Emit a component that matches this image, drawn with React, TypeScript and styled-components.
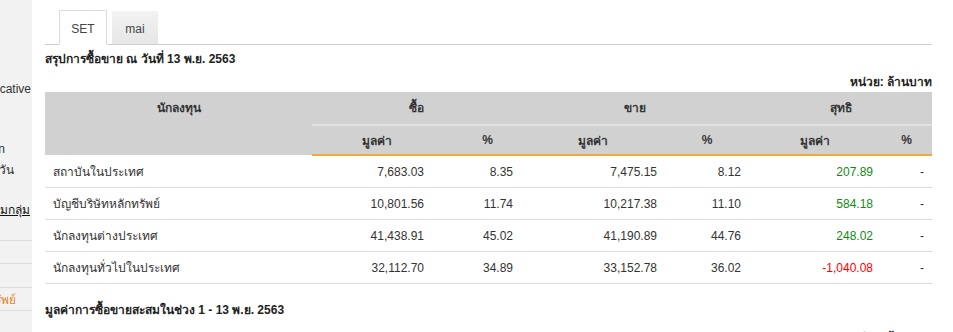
import React from "react";
import styled, { createGlobalStyle } from "styled-components";

const Global = createGlobalStyle`
  html, body { margin: 0; padding: 0; background: #fff; }
  body { font-family: Tahoma, "Liberation Sans", Arial, sans-serif; color: #333; font-size: 12px; }
`;

const Page = styled.div`
  display: flex;
  width: 953px;
  height: 332px;
  overflow: hidden;
`;

const Sidebar = styled.aside`
  flex: 0 0 32px;
  width: 32px;
  background: #f2f2f2;
  display: flex;
  justify-content: flex-end;
  overflow: hidden;
`;

const SideInner = styled.div`
  flex: 0 0 220px;
  width: 220px;
  display: flex;
  flex-direction: column;
`;

const SideItem = styled.div<{ $top: number; $end: number; $color?: string; $under?: boolean; $line?: boolean }>`
  margin-top: ${(p) => p.$top}px;
  height: 20px;
  line-height: 20px;
  text-align: right;
  padding-right: ${(p) => 32 - p.$end}px;
  white-space: nowrap;
  font-family: "Liberation Sans", Arial, sans-serif;
  font-size: 12px;
  color: ${(p) => p.$color || "#333"};
  text-decoration: ${(p) => (p.$under ? "underline" : "none")};
  border-bottom: ${(p) => (p.$line ? "1px solid #dcdcdc" : "none")};
`;

const Main = styled.main`
  flex: 1;
  padding: 9px 21px 0 13px;
  min-width: 0;
`;

const Tabs = styled.div`
  display: flex;
  gap: 5px;
  padding-left: 14px;
  border-bottom: 1px solid #cfcfcf;
  height: 35px;
  align-items: flex-end;
`;

const Tab = styled.div<{ $active?: boolean }>`
  width: ${(p) => (p.$active ? 48 : 46)}px;
  height: ${(p) => (p.$active ? 35 : 34)}px;
  box-sizing: border-box;
  display: flex;
  align-items: center;
  justify-content: center;
  font-family: "Liberation Sans", Arial, sans-serif;
  font-size: 12px;
  color: #444;
  margin-bottom: -1px;
  background: ${(p) => (p.$active ? "#fff" : "linear-gradient(#f3f3f3, #e6e6e6)")};
  border: ${(p) => (p.$active ? "1px solid #dcdcdc" : "none")};
  border-bottom: ${(p) => (p.$active ? "1px solid #fff" : "1px solid #cfcfcf")};
  padding-top: 2px;
`;

const Title = styled.div<{ $top: number }>`
  margin-top: ${(p) => p.$top}px;
  font-weight: bold;
  font-size: 12px;
  line-height: 16px;
  color: #222;
`;

const Unit = styled.div<{ $top: number }>`
  margin-top: ${(p) => p.$top}px;
  text-align: right;
  font-weight: bold;
  font-size: 12px;
  line-height: 16px;
  color: #222;
`;

const Table = styled.table`
  width: 887px;
  border-collapse: collapse;
  table-layout: fixed;
  margin-top: 2px;
`;

const GroupTh = styled.th<{ $lead?: boolean }>`
  background: #d1d1d1;
  height: 32px;
  padding: 0;
  font-weight: bold;
  font-size: 12px;
  color: #333;
  text-align: center;
  vertical-align: ${(p) => (p.$lead ? "top" : "middle")};
  line-height: 32px;
  border-bottom: ${(p) => (p.$lead ? "none" : "2px solid #e2e2e2")};
`;

const SubTh = styled.th<{ $shift?: number }>`
  background: #d1d1d1;
  height: 28px;
  padding: 0 0 0 ${(p) => p.$shift || 0}px;
  font-weight: bold;
  font-size: 12px;
  color: #333;
  text-align: center;
  border-bottom: 2px solid #f4a93a;
`;

const Td = styled.td<{ $num?: boolean; $color?: string }>`
  height: 31px;
  padding: 0 ${(p) => (p.$num ? 8 : 0)}px 0 ${(p) => (p.$num ? 0 : 8)}px;
  border-bottom: 1px solid #dcdcdc;
  text-align: ${(p) => (p.$num ? "right" : "left")};
  font-family: ${(p) => (p.$num ? `"Liberation Sans", Arial, sans-serif` : `Tahoma, "Liberation Sans", sans-serif`)};
  font-size: 12px;
  color: ${(p) => p.$color || "#333"};
  white-space: nowrap;
`;

type Row = { name: string; buy: string; buyP: string; sell: string; sellP: string; net: string };

const rows: Row[] = [
  { name: "สถาบันในประเทศ", buy: "7,683.03", buyP: "8.35", sell: "7,475.15", sellP: "8.12", net: "207.89" },
  { name: "บัญชีบริษัทหลักทรัพย์", buy: "10,801.56", buyP: "11.74", sell: "10,217.38", sellP: "11.10", net: "584.18" },
  { name: "นักลงทุนต่างประเทศ", buy: "41,438.91", buyP: "45.02", sell: "41,190.89", sellP: "44.76", net: "248.02" },
  { name: "นักลงทุนทั่วไปในประเทศ", buy: "32,112.70", buyP: "34.89", sell: "33,152.78", sellP: "36.02", net: "-1,040.08" },
];

const widths = [267, 120, 89, 144, 84, 132, 51];

export default function App() {
  return (
    <>
      <Global />
      <Page>
        <Sidebar>
          <SideInner>
            <SideItem $top={79} $end={31}>Indicative</SideItem>
            <SideItem $top={40} $end={5}>Information</SideItem>
            <SideItem $top={1} $end={14}>ข้อมูลรายวัน</SideItem>
            <SideItem $top={20} $end={30} $color="#111" $under>ข้อมูลตามกลุ่ม</SideItem>
            <SideItem $top={0} $end={30} $line>&nbsp;</SideItem>
            <SideItem $top={2} $end={30} $line>&nbsp;</SideItem>
            <SideItem $top={3} $end={30} $line>&nbsp;</SideItem>
            <SideItem $top={2} $end={16} $color="#e8852a" $line>ข้อมูลหลักทรัพย์</SideItem>
          </SideInner>
        </Sidebar>
        <Main>
          <Tabs>
            <Tab $active>SET</Tab>
            <Tab>mai</Tab>
          </Tabs>
          <Title $top={6}>สรุปการซื้อขาย ณ วันที่ 13 พ.ย. 2563</Title>
          <Unit $top={7}>หน่วย: ล้านบาท</Unit>
          <Table>
            <colgroup>
              {widths.map((w, i) => (
                <col key={i} style={{ width: w }} />
              ))}
            </colgroup>
            <thead>
              <tr>
                <GroupTh $lead rowSpan={2}>นักลงทุน</GroupTh>
                <GroupTh colSpan={2}>ซื้อ</GroupTh>
                <GroupTh colSpan={2}>ขาย</GroupTh>
                <GroupTh colSpan={2}>สุทธิ</GroupTh>
              </tr>
              <tr>
                <SubTh $shift={10}>มูลค่า</SubTh>
                <SubTh $shift={22}>%</SubTh>
                <SubTh>มูลค่า</SubTh>
                <SubTh>%</SubTh>
                <SubTh>มูลค่า</SubTh>
                <SubTh>%</SubTh>
              </tr>
            </thead>
            <tbody>
              {rows.map((r) => (
                <tr key={r.name}>
                  <Td>{r.name}</Td>
                  <Td $num>{r.buy}</Td>
                  <Td $num>{r.buyP}</Td>
                  <Td $num>{r.sell}</Td>
                  <Td $num>{r.sellP}</Td>
                  <Td $num $color={r.net.startsWith("-") ? "#ff0000" : "#138a13"}>{r.net}</Td>
                  <Td $num>-</Td>
                </tr>
              ))}
            </tbody>
          </Table>
          <Title $top={18}>มูลค่าการซื้อขายสะสมในช่วง 1 - 13 พ.ย. 2563</Title>
          <Unit $top={11}>หน่วย: ล้านบาท</Unit>
        </Main>
      </Page>
    </>
  );
}
